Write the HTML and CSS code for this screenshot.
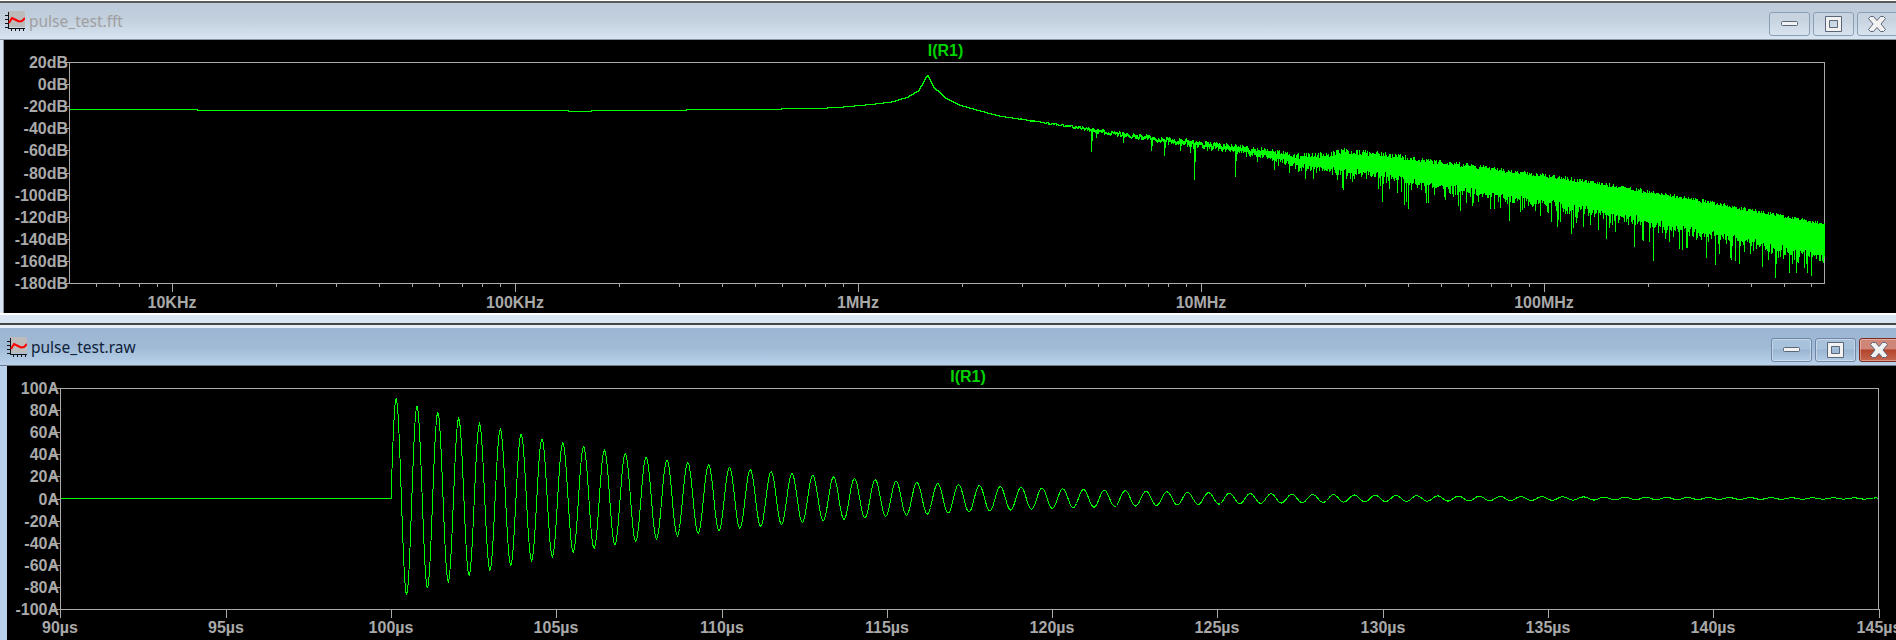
FILE: index.html
```html
<!DOCTYPE html>
<html lang="en">
<head>
  <meta charset="UTF-8">
  <title>LTspice waveform viewers</title>
  <link rel="stylesheet" href="styles.css">
</head>
<body>
  <div class="window inactive">
    <div class="titlebar">
      <svg class="app-icon" viewBox="0 0 20 20" width="20" height="20"><use href="#wave-icon"/></svg>
      <span class="title">pulse_test.fft</span>
      <div class="caption-btns">
        <div class="cap-btn"><svg width="18" height="6"><rect x="0.5" y="0.5" width="16" height="4" rx="1" class="glyph"/></svg></div>
        <div class="cap-btn"><svg width="18" height="17"><path d="M.5 .5h16v15h-16z M4.5 4.5v7h8v-7z" class="glyph" fill-rule="evenodd"/></svg></div>
        <div class="cap-btn"><svg width="19" height="16"><path d="M.5 2.5l2-2h3l3.5 4 3.5-4h3l2 2-4.500 5.500 4.500 5.500-2 2h-3l-3.500-4-3.500 4h-3l-2-2 4.500-5.500z" class="glyph"/></svg></div>
      </div>
    </div>
    <div class="client"><svg id="fft-plot" class="plot"></svg></div>
    <div class="win-foot"></div>
  </div>

  <div class="window active">
    <div class="titlebar">
      <svg class="app-icon" viewBox="0 0 20 20" width="20" height="20"><use href="#wave-icon"/></svg>
      <span class="title">pulse_test.raw</span>
      <div class="caption-btns">
        <div class="cap-btn"><svg width="18" height="6"><rect x="0.5" y="0.5" width="16" height="4" rx="1" class="glyph"/></svg></div>
        <div class="cap-btn"><svg width="18" height="17"><path d="M.5 .5h16v15h-16z M4.500 4.500v7h8v-7z" class="glyph" fill-rule="evenodd"/></svg></div>
        <div class="cap-btn close"><svg width="19" height="16"><path d="M.5 2.5l2-2h3l3.5 4 3.5-4h3l2 2-4.500 5.500 4.500 5.500-2 2h-3l-3.500-4-3.500 4h-3l-2-2 4.500-5.500z" class="glyph"/></svg></div>
      </div>
    </div>
    <div class="client"><svg id="time-plot" class="plot"></svg></div>
  </div>

  <svg width="0" height="0" class="defs">
    <symbol id="wave-icon" viewBox="0 0 20 20">
      <rect x="3" y="0" width="17" height="16" fill="#bcbcbc"/>
      <path d="M3.500 1v17M0 4.500h3M0 8.500h3M0 12.500h3M0 16.500h3M3 17.500h17M6.500 18v2M10.500 18v2M14.500 18v2M18.500 18v2" stroke="#111" fill="none" shape-rendering="crispEdges"/>
      <path d="M4 12l3-5 4 2 3 1.500 3-.5 3-3" stroke="#f00" stroke-width="2" fill="none"/>
    </symbol>
  </svg>

  <script src="script.js"></script>
</body>
</html>
```

FILE: styles.css
```css
html, body {
  margin: 0;
  height: 100%;
  overflow: hidden;
}
body {
  display: flex;
  flex-direction: column;
  width: 1896px;
  height: 640px;
  background: #000;
  font-family: "Noto Sans", "Open Sans", sans-serif;
}
.defs {
  position: absolute;
}
.window {
  display: flex;
  flex-direction: column;
  box-sizing: border-box;
}
.inactive {
  height: 323px;
  border-top: 1px solid #fff;
  background: #d9e5f2;
}
.active {
  height: 317px;
  border-top: 2px solid #444;
  background: #b9d1ea;
}
.titlebar {
  display: flex;
  align-items: center;
  flex: none;
  box-sizing: border-box;
}
.inactive .titlebar {
  height: 39px;
  padding-left: 5px;
  border-top: 2px solid #5a5a5a;
  border-bottom: 1px solid #8a949e;
  background: linear-gradient(#bccad9, #c3d0de 50%, #d9e5f2);
  color: #a0a0a0;
}
.active .titlebar {
  height: 41px;
  padding-left: 7px;
  border-top: 3px solid #e8eef5;
  border-bottom: 1px solid #6f7a86;
  background: linear-gradient(#9bb5d2, #a0bad6 50%, #b9d1ea);
  color: #0e2238;
}
.app-icon {
  flex: none;
}
.title {
  margin-left: 4px;
  font-size: 15.5px;
  line-height: 20px;
}
.caption-btns {
  display: flex;
  gap: 3px;
  margin-left: auto;
  align-self: flex-start;
  margin-top: 9px;
}
.cap-btn {
  display: flex;
  align-items: center;
  justify-content: center;
  box-sizing: border-box;
  width: 41px;
  height: 24px;
  border: 1px solid #8c9fb8;
  border-radius: 3px;
  background: rgba(255, 255, 255, 0.1);
}
.cap-btn:last-child {
  margin-right: -2px;
}
.active .caption-btns {
  margin-top: 10px;
}
.active .cap-btn {
  border-color: #6f86a6;
  box-shadow: inset 0 0 0 1px rgba(255, 255, 255, 0.35);
  background: linear-gradient(#a9c2dc 45%, #9ab5d2 50%, #b4cce5);
}
.active .cap-btn:last-child {
  margin-right: -4px;
}
.active .cap-btn.close {
  border-color: #7c2a20;
  background: linear-gradient(#cf8577 45%, #b4432c 50%, #c4674f);
}
.glyph {
  fill: #f2f2f2;
  stroke: #5a6778;
}
.client {
  flex: none;
  background: #000;
}
.inactive .client {
  height: 273px;
  margin-left: 3px;
  border-left: 1px solid #8a949e;
}
.active .client {
  height: 274px;
  margin-left: 7px;
}
.win-foot {
  flex: none;
  height: 10px;
  box-sizing: border-box;
  border-top: 2px solid #fff;
}
.plot {
  display: block;
  width: 100%;
  height: 100%;
  font: bold 16px "Liberation Sans", Arial, sans-serif;
}
.axis {
  fill: none;
  stroke: #aaa;
  shape-rendering: crispEdges;
}
.label {
  fill: #a9a9a9;
}
.trace-title {
  fill: #00d400;
  text-anchor: middle;
}
.trace {
  fill: none;
  stroke: #0f0;
  shape-rendering: crispEdges;
}
```

FILE: script.js
```js
// small seeded random so both plots look the same every load
let seed = 12345;
function rnd() {
  seed = (seed * 1664525 + 1013904223) % 4294967296;
  return seed / 4294967296;
}

// linear interpolation through [x, y] points, flat outside them
function lerp(points, x) {
  if (x <= points[0][0]) return points[0][1];
  for (let i = 1; i < points.length; i++) {
    if (x <= points[i][0]) {
      const a = points[i - 1], b = points[i];
      return a[1] + (b[1] - a[1]) * (x - a[0]) / (b[0] - a[0]);
    }
  }
  return points[points.length - 1][1];
}

function buildPlot(id, p) {
  const svg = document.getElementById(id);
  svg.setAttribute('viewBox', `${p.vx} ${p.vy} ${1896 - p.vx} ${p.vh}`);

  let ticks = '';
  let html = '';
  p.yLabels.forEach((text, i) => {
    const y = Math.round(p.top + (p.bottom - p.top) * i / (p.yLabels.length - 1));
    ticks += `M${p.left - 8} ${y + .5}H${p.left}`;
    html += `<text class="label" x="${p.left - 1}" y="${y + 6}" text-anchor="end">${text}</text>`;
  });
  p.xMajor.forEach(m => {
    const x = Math.round(m.x);
    ticks += `M${x + .5} ${p.bottom}v9`;
    html += `<text class="label" x="${x}" y="${p.bottom + p.labelDrop}" text-anchor="middle">${m.text}</text>`;
  });
  p.xMinor.forEach(x => {
    ticks += `M${Math.round(x) + .5} ${p.bottom}v4`;
  });

  const box = `M${p.left + .5} ${p.top + .5}H${p.right + .5}V${p.bottom + .5}H${p.left + .5}Z`;
  const titleX = (p.left + p.right) / 2 - 1;
  svg.innerHTML = `
    <path class="axis" d="${box}${ticks}"/>
    ${html}
    <text class="trace-title" x="${titleX}" y="${p.top - 6}">I(R1)</text>
    <path class="trace" d="${p.trace}"/>`;
}

// FFT of the pulse
function fftTrace() {
  const upper = [[70, 109], [323, 110], [560, 110], [575, 111], [590, 110.500], [800, 108.300], [833, 107.300], [867, 104.300],
    [890, 101.700], [907, 96.700], [918, 90], [926.700, 74.300], [933, 86.700], [945, 98], [960, 105], [980, 110.700],
    [1000, 116], [1020, 118.700], [1086, 128], [1133, 135], [1193, 141.700], [1267, 150], [1300, 156],
    [1325, 155], [1343, 151], [1377, 154], [1457, 164], [1571, 179], [1686, 198], [1825, 224]];
  const solid = [[1040, 0], [1090, 1], [1200, 3], [1270, 7], [1305, 12], [1343, 22], [1457, 28], [1571, 32], [1686, 36], [1825, 38]];
  const noise = [[1000, 0], [1040, 1.200], [1100, 4], [1300, 6], [1825, 3]];
  const spikeChance = [[1040, 0], [1250, .2], [1300, .4], [1825, .55]];
  const spikes = { 1091: 151, 1164: 155, 1194: 179, 1235: 176, 1653: 260, 1775: 277, 1811: 275, 1382: 201, 1406: 201, 1571: 233 };

  let d = '';
  let prev = lerp(upper, 70);
  for (let x = 70; x <= 1824; x++) {
    const n = lerp(noise, x);
    const top = lerp(upper, x) - rnd() * n + n * .5;
    let bot = top + lerp(solid, x) * (.75 + rnd() * .25);
    if (rnd() < lerp(spikeChance, x)) {
      bot += rnd() * rnd() * (x > 1300 ? 28 : 15);
    }
    bot = Math.min(bot, 272);
    if (spikes[x]) bot = spikes[x];
    const y1 = Math.min(top, prev);
    const y2 = Math.max(bot, prev);
    d += `M${x + .5} ${Math.round(y1)}V${Math.round(y2) + 1}`;
    prev = (top + bot) / 2;
  }
  return d;
}

// damped ring after the step at 100us
function timeTrace() {
  const t0 = 390.500;
  const period = 20.83;
  const tau = 285;
  let d = 'M61 498.500H391.500V498';
  for (let x = 391; x <= 1878; x++) {
    const t = x - t0;
    const y = 498.500 - 102 * Math.exp(-t / tau) * Math.sin(2 * Math.PI * t / period);
    d += `L${x + .5} ${y.toFixed(1)}`;
  }
  return d;
}

// decade ticks for the log axis
const fftMinor = [];
for (let e = 0; e < 6; e++) {
  for (let m = 2; m < 10; m++) {
    const base = 172.300 + 343 * (e - 1) + 343 * Math.log10(m);
    if (base > 70 && base < 1824) fftMinor.push(base);
  }
}

buildPlot('fft-plot', {
  vx: 4, vy: 40, vh: 273,
  left: 69, right: 1824, top: 62, bottom: 283, labelDrop: 25,
  yLabels: ['20dB', '0dB', '-20dB', '-40dB', '-60dB', '-80dB', '-100dB', '-120dB', '-140dB', '-160dB', '-180dB'],
  xMajor: [
    { x: 172.300, text: '10KHz' }, { x: 515.300, text: '100KHz' }, { x: 858.300, text: '1MHz' },
    { x: 1201.300, text: '10MHz' }, { x: 1544.300, text: '100MHz' }
  ],
  xMinor: fftMinor,
  trace: fftTrace()
});

const timeMajor = [];
for (let i = 0; i <= 11; i++) {
  timeMajor.push({ x: 60.300 + i * 165.300, text: `${90 + i * 5}µs` });
}

buildPlot('time-plot', {
  vx: 7, vy: 366, vh: 274,
  left: 60, right: 1878, top: 388, bottom: 609, labelDrop: 24,
  yLabels: ['100A', '80A', '60A', '40A', '20A', '0A', '-20A', '-40A', '-60A', '-80A', '-100A'],
  xMajor: timeMajor,
  xMinor: [],
  trace: timeTrace()
});
```
